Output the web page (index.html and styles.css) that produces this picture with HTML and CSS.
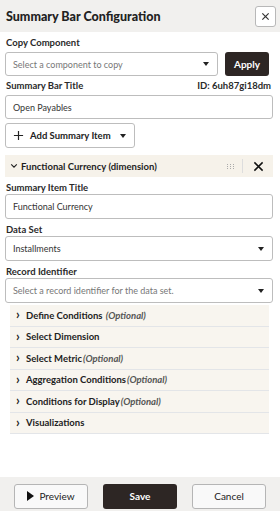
FILE: index.html
```html
<!DOCTYPE html>
<html lang="en">
<head>
    <meta charset="UTF-8">
    <meta name="viewport" content="width=device-width, initial-scale=1.0">
    <title>Summary Bar Configuration</title>
    <link rel="stylesheet" href="styles.css">
</head>
<body>
<div class="panel">

    <div class="header">
        <h1>Summary Bar Configuration</h1>
        <button class="close-btn" title="Close">
            <svg width="9" height="9" viewBox="0 0 10 10"><path d="M1.5 1.5 L8.5 8.5 M8.5 1.5 L1.5 8.5" stroke="#333" stroke-width="1.3"/></svg>
        </button>
    </div>

    <div class="content">
        <!-- Copy component -->
        <div class="label first">Copy Component</div>
        <div class="copy-row">
            <div class="select placeholder">
                <span>Select a component to copy</span>
                <span class="caret"></span>
            </div>
            <button class="btn-dark apply">Apply</button>
        </div>

        <div class="label split">
            <span>Summary Bar Title</span>
            <span>ID: 6uh87gi18dm</span>
        </div>
        <div class="input">Open Payables</div>

        <button class="add-btn">
            <svg width="11" height="11" viewBox="0 0 12 12"><path d="M6 1 V11 M1 6 H11" stroke="#222" stroke-width="1.3"/></svg>
            <span>Add Summary Item</span>
            <span class="caret"></span>
        </button>

        <!-- Summary item -->
        <div class="item-head">
            <svg class="chev-down" width="8" height="8" viewBox="0 0 10 10"><path d="M1.5 3 L5 6.5 L8.5 3" fill="none" stroke="#222" stroke-width="1.4"/></svg>
            <span class="item-title">Functional Currency (dimension)</span>
            <span class="drag">
                <svg width="7" height="5" viewBox="0 0 7 5"><g fill="#aaa"><rect x="0" y="0" width="1" height="1"/><rect x="3" y="0" width="1" height="1"/><rect x="6" y="0" width="1" height="1"/><rect x="0" y="2" width="1" height="1"/><rect x="3" y="2" width="1" height="1"/><rect x="6" y="2" width="1" height="1"/><rect x="0" y="4" width="1" height="1"/><rect x="3" y="4" width="1" height="1"/><rect x="6" y="4" width="1" height="1"/></g></svg>
            </span>
            <span class="sep"></span>
            <svg class="remove" width="11" height="11" viewBox="0 0 12 12"><path d="M1.5 1.5 L10.5 10.5 M10.5 1.5 L1.5 10.5" stroke="#111" stroke-width="1.6"/></svg>
        </div>

        <div class="label">Summary Item Title</div>
        <div class="input">Functional Currency</div>

        <div class="label">Data Set</div>
        <div class="select">
            <span>Installments</span>
            <span class="caret"></span>
        </div>

        <div class="label">Record Identifier</div>
        <div class="select placeholder">
            <span>Select a record identifier for the data set.</span>
            <span class="caret"></span>
        </div>

        <div class="sections">
            <div class="section"><span class="chev">&rsaquo;</span>Define Conditions&nbsp;<em>(Optional)</em></div>
            <div class="section"><span class="chev">&rsaquo;</span>Select Dimension</div>
            <div class="section"><span class="chev">&rsaquo;</span>Select Metric<em>(Optional)</em></div>
            <div class="section"><span class="chev">&rsaquo;</span>Aggregation Conditions<em>(Optional)</em></div>
            <div class="section"><span class="chev">&rsaquo;</span>Conditions for Display<em>(Optional)</em></div>
            <div class="section"><span class="chev">&rsaquo;</span>Visualizations</div>
        </div>
    </div>

    <div class="footer">
        <button class="btn-light">
            <svg width="7" height="10" viewBox="0 0 7 10"><path d="M0 0 L7 5 L0 10 Z" fill="#111"/></svg>
            Preview
        </button>
        <button class="btn-dark">Save</button>
        <button class="btn-light">Cancel</button>
    </div>

</div>
</body>
</html>
```

FILE: styles.css
```css
/* Panel layout */
body {
    margin: 0;
    padding: 0;
    font-family: Lato, "Noto Sans", sans-serif;
    color: #1e1e1e;
    background-color: #ffffff;
}
.panel {
    height: 511px;
    display: flex;
    flex-direction: column;
}
.header {
    height: 32px;
    background-color: #f1f0ee;
    display: flex;
    align-items: center;
    justify-content: space-between;
    padding: 0 4px 0 6px;
}
.header h1 {
    margin: 0;
    font-size: 12.5px;
    font-weight: 900;
    color: #222;
}
.close-btn {
    width: 21px;
    height: 21px;
    padding: 0;
    border: 1px solid #b8b8b8;
    border-radius: 3px;
    background-color: #fff;
    display: flex;
    align-items: center;
    justify-content: center;
}

/* Form */
.content {
    flex: 1;
    padding: 0 7px 0 5px;
}
.label {
    font-size: 9.5px;
    font-weight: 700;
    color: #2a2a2a;
    height: 12px;
    line-height: 12px;
    margin: 5px 0 0 1px;
}
.label.first {
    margin: 5px 0 3px 1px;
}
.label.split {
    display: flex;
    justify-content: space-between;
    margin: 4px 2px 3px 1px;
}
.copy-row {
    display: flex;
    gap: 7px;
    align-items: stretch;
}
.copy-row .select {
    flex: 1;
}
.select, .input {
    box-sizing: border-box;
    height: 25px;
    border: 1px solid #bdbdbd;
    border-radius: 3px;
    padding: 0 8px 0 7px;
    font-size: 9px;
    display: flex;
    align-items: center;
    justify-content: space-between;
    color: #333;
}
.copy-row .select, .split + .input {
    height: 24px;
}
.placeholder {
    color: #777;
}
.caret {
    width: 0;
    height: 0;
    border-left: 3.5px solid transparent;
    border-right: 3.5px solid transparent;
    border-top: 4px solid #222;
}
.btn-dark {
    background-color: #2d2624;
    color: #fff;
    border: none;
    border-radius: 3px;
    font-family: inherit;
    font-size: 10px;
    font-weight: 700;
}
.apply {
    width: 44px;
    height: 24px;
    margin-right: 4px;
}
.add-btn {
    box-sizing: border-box;
    margin-top: 4px;
    height: 25px;
    width: 130px;
    border: 1px solid #bdbdbd;
    border-radius: 3px;
    background-color: #fff;
    display: flex;
    align-items: center;
    gap: 6px;
    padding: 0 8px 0 7px;
    font-family: inherit;
    font-size: 9.5px;
    font-weight: 700;
    color: #222;
    white-space: nowrap;
}
.add-btn .caret {
    margin-left: 3px;
}

/* Summary item */
.item-head {
    margin-top: 7px;
    height: 22px;
    background-color: #f6f2ea;
    display: flex;
    align-items: center;
    padding: 0 9px 0 5px;
    font-size: 9.5px;
    font-weight: 700;
}
.chev-down {
    margin-right: 3px;
}
.item-title {
    flex: 1;
}
.drag {
    display: flex;
    margin-right: 8px;
}
.sep {
    width: 1px;
    height: 14px;
    background-color: #ddd;
    margin-right: 10px;
}
.sections {
    margin: 2px 4px 0 5px;
}
.section {
    height: 20.5px;
    background-color: #f8f5ef;
    border-bottom: 1px solid #e3e5e8;
    display: flex;
    align-items: center;
    padding-left: 6px;
    font-size: 9.5px;
    font-weight: 700;
    color: #222;
}
.section em {
    font-weight: 700;
    color: #555;
    margin-left: 1px;
}
.chev {
    font-size: 13px;
    width: 10px;
    margin-top: -2px;
}

/* Footer */
.footer {
    height: 34px;
    background-color: #f1f0ee;
    display: flex;
    align-items: center;
    justify-content: center;
    gap: 15px;
    padding-top: 4px;
    box-sizing: border-box;
}
.footer button {
    width: 74px;
    height: 25px;
    font-size: 10px;
}
.btn-light {
    border: 1px solid #b5b5b5;
    border-radius: 3px;
    background-color: #f9f9f9;
    font-family: inherit;
    color: #222;
    display: flex;
    align-items: center;
    justify-content: center;
    gap: 5px;
}
```
